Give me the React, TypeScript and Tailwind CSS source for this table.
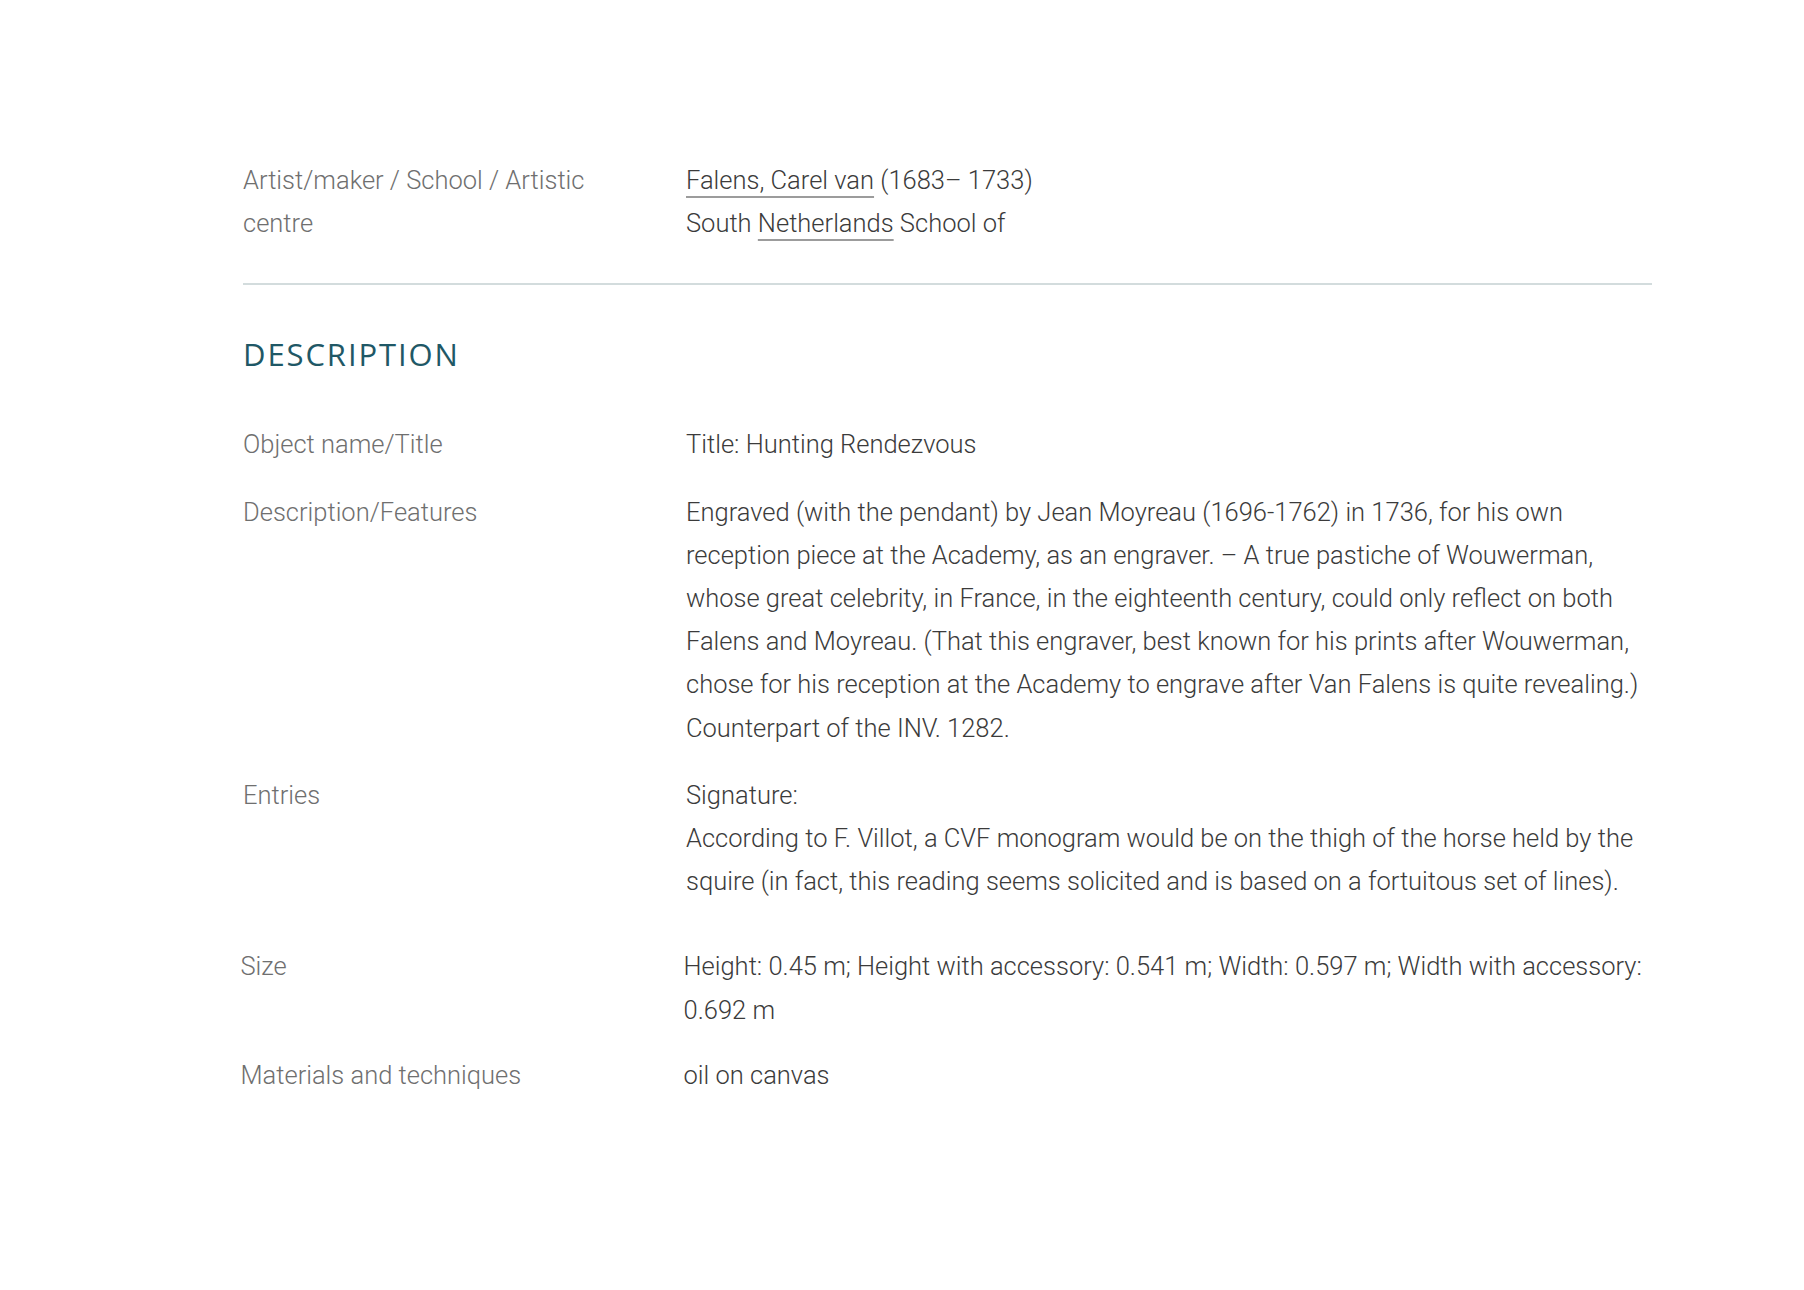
const labelCls = 'text-[#6f6f6f]';
const valueCls = 'text-[#3b3b3b]';
const linkCls = 'underline decoration-[#9c9c9c] decoration-[1.5px] underline-offset-[7px]';

type Row = { label: string; value: React.ReactNode; extra?: string; shift?: boolean };

const rows: Row[] = [
  { label: 'Object name/Title', value: 'Title: Hunting Rendezvous' },
  {
    label: 'Description/Features',
    value: (
      <>
        Engraved (with the pendant) by Jean Moyreau (1696-1762) in 1736, for his own reception piece at the
        Academy, as an engraver. – A true pastiche of Wouwerman, whose great celebrity, in France, in the
        eighteenth century, could only reflect on both Falens and Moyreau. (That this engraver, best known for
        his prints after Wouwerman, chose for his reception at the Academy to engrave after Van Falens is quite
        revealing.)
        <br />
        Counterpart of the INV. 1282.
      </>
    ),
  },
  {
    label: 'Entries',
    value: (
      <>
        Signature:
        <br />
        According to F. Villot, a CVF monogram would be on the thigh of the horse held by the squire (in fact,
        this reading seems solicited and is based on a fortuitous set of lines).
      </>
    ),
    extra: 'pb-[18px]',
  },
  {
    label: 'Size',
    value: 'Height: 0.45 m; Height with accessory: 0.541 m; Width: 0.597 m; Width with accessory: 0.692 m',
    shift: true,
    extra: '-mb-[2px]',
  },
  { label: 'Materials and techniques', value: 'oil on canvas', shift: true },
];

export default function App() {
  return (
    <div
      className="min-h-[1290px] w-full bg-white font-light text-[25.5px] leading-[43.2px]"
      style={{ fontFamily: 'Roboto, "Liberation Sans", sans-serif' }}
    >
      <div className="ml-[243px] w-[1409px] pt-[159px]">
        {/* artist block */}
        <section className="grid grid-cols-[443px_1fr] pb-[38px] border-b-2 border-[#d3dcdd]">
          <div className={`${labelCls} pr-10`}>Artist/maker / School / Artistic centre</div>
          <div className={valueCls}>
            <div>
              <a className={linkCls}>Falens, Carel van</a> (1683– 1733)
            </div>
            <div>
              South <a className={linkCls}>Netherlands</a> School of
            </div>
          </div>
        </section>

        {/* description */}
        <h2
          className="mt-[49px] text-[31px] leading-[40px] font-normal text-[#1f5866] tracking-[1.9px]"
          style={{ fontFamily: '"Open Sans", "DejaVu Sans", sans-serif' }}
        >
          DESCRIPTION
        </h2>

        <div className="mt-[49px] flex flex-col gap-6">
          {rows.map((r) => (
            <div
              key={r.label}
              className={`grid grid-cols-[443px_1fr] ${r.extra ?? ''} ${r.shift ? '-ml-[2.5px]' : ''}`}
            >
              <div className={labelCls}>{r.label}</div>
              <div className={valueCls}>{r.value}</div>
            </div>
          ))}
        </div>
      </div>
    </div>
  );
}
